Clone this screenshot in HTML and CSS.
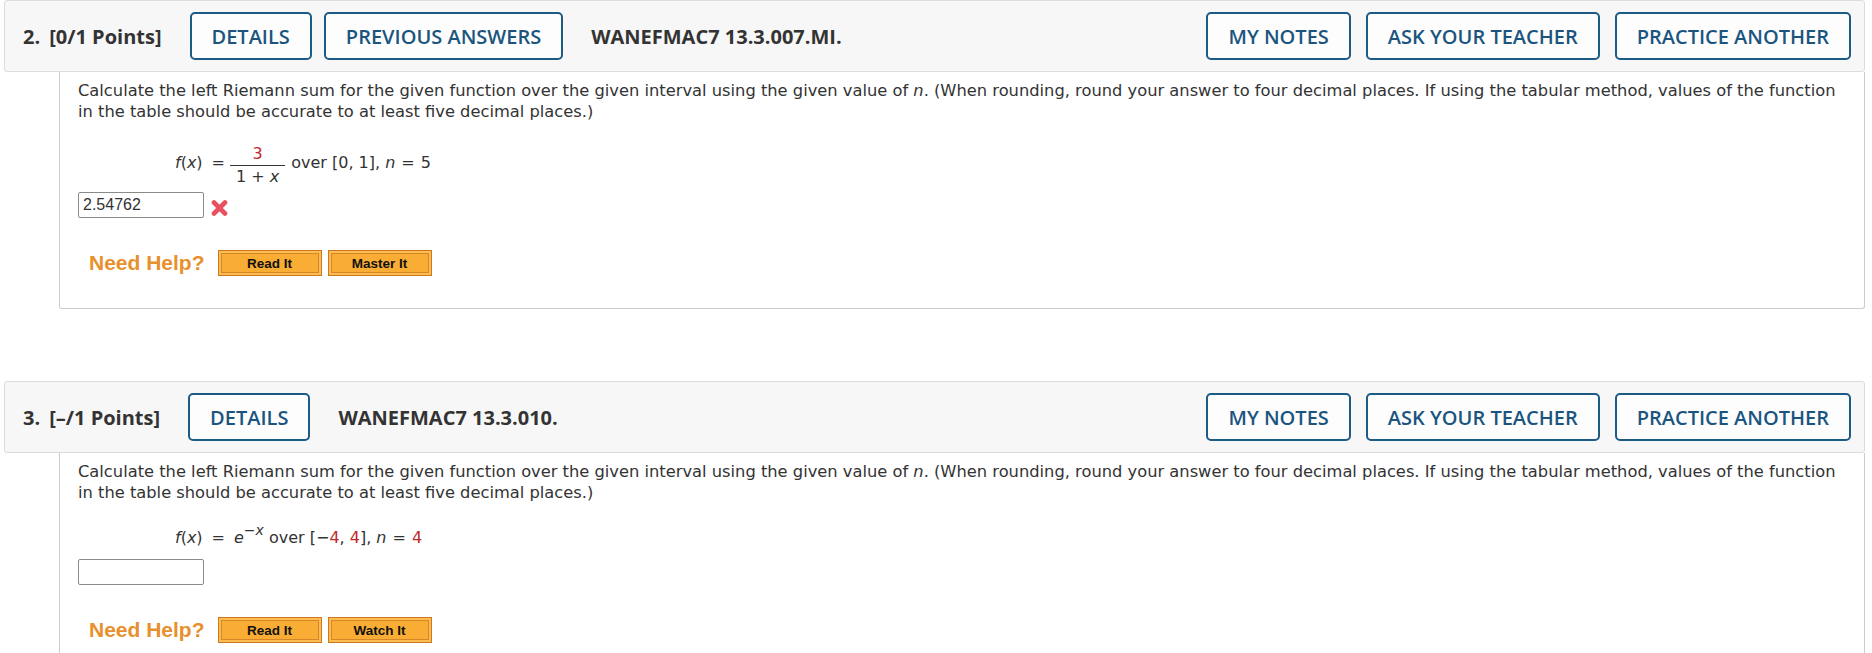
FILE: index.html
```html
<!DOCTYPE html>
<html>
<head>
<meta charset="utf-8">
<link rel="stylesheet" href="styles.css">
</head>
<body>
<div class="question q-first">
  <div class="qhead">
    <span class="qtitle"><span class="qnum">2.</span>[0/1 Points]</span>
    <div class="btns">
      <span class="hbtn">DETAILS</span>
      <span class="hbtn">PREVIOUS ANSWERS</span>
    </div>
    <span class="qid">WANEFMAC7 13.3.007.MI.</span>
    <div class="btns right">
      <span class="hbtn">MY NOTES</span>
      <span class="hbtn">ASK YOUR TEACHER</span>
      <span class="hbtn">PRACTICE ANOTHER</span>
    </div>
  </div>
  <div class="qbody">
    <p class="prompt">Calculate the left Riemann sum for the given function over the given interval using the given value of <i>n</i>. (When rounding, round your answer to four decimal places. If using the tabular method, values of the function in the table should be accurate to at least five decimal places.)</p>
    <div class="formula">
      <span><i>f</i>(<i>x</i>)</span><span class="eq">=</span>
      <span class="frac"><span class="num red">3</span><span class="den">1 + <i>x</i></span></span>
      <span class="after">over [0, 1], <i>n</i><span class="eq2">=</span>5</span>
    </div>
    <div class="answer">
      <span class="inbox">2.54762</span>
      <svg class="wrong" width="17" height="16" viewBox="0 0 17 16"><path d="M3 2.5 L14 13.5 M14 2.5 L3 13.5" stroke="#e8515f" stroke-width="4.6" stroke-linecap="round" fill="none"/></svg>
    </div>
    <div class="help">
      <span class="needhelp">Need Help?</span>
      <span class="obtn">Read It</span>
      <span class="obtn">Master It</span>
    </div>
  </div>
</div>

<div class="question q-second">
  <div class="qhead">
    <span class="qtitle"><span class="qnum">3.</span>[&ndash;/1 Points]</span>
    <div class="btns">
      <span class="hbtn">DETAILS</span>
    </div>
    <span class="qid">WANEFMAC7 13.3.010.</span>
    <div class="btns right">
      <span class="hbtn">MY NOTES</span>
      <span class="hbtn">ASK YOUR TEACHER</span>
      <span class="hbtn">PRACTICE ANOTHER</span>
    </div>
  </div>
  <div class="qbody">
    <p class="prompt">Calculate the left Riemann sum for the given function over the given interval using the given value of <i>n</i>. (When rounding, round your answer to four decimal places. If using the tabular method, values of the function in the table should be accurate to at least five decimal places.)</p>
    <div class="formula single">
      <span><i>f</i>(<i>x</i>)</span><span class="eq">=</span>
      <span><i>e</i><sup>&minus;<i>x</i></sup> over [&minus;<span class="red">4</span>, <span class="red">4</span>], <i>n</i><span class="eq2">=</span><span class="red">4</span></span>
    </div>
    <div class="answer">
      <span class="inbox"></span>
    </div>
    <div class="help">
      <span class="needhelp">Need Help?</span>
      <span class="obtn">Read It</span>
      <span class="obtn">Watch It</span>
    </div>
  </div>
</div>
</body>
</html>
```
FILE: styles.css
```css
html, body {
  margin: 0;
  padding: 0;
  background: #ffffff;
}
body {
  font-family: "DejaVu Sans", Verdana, sans-serif;
  color: #333333;
  width: 1872px;
  overflow: hidden;
}
.question {
  margin-right: 7px;
}
.q-second {
  margin-top: 72px;
}
.qhead {
  margin-left: 4px;
  height: 72px;
  box-sizing: border-box;
  background: #f7f7f7;
  border: 1px solid #dcdcdc;
  border-radius: 3px;
  display: flex;
  align-items: center;
  padding: 0 13px 0 18px;
  font-family: "Open Sans", sans-serif;
  font-size: 20px;
}
.qtitle {
  font-weight: 700;
  color: #333333;
  margin-right: 28px;
  white-space: nowrap;
}
.qnum {
  margin-right: 9px;
}
.btns {
  display: flex;
  gap: 12px;
}
.btns.right {
  margin-left: auto;
  gap: 15px;
}
.hbtn {
  display: flex;
  align-items: center;
  height: 48px;
  box-sizing: border-box;
  padding: 0 20px;
  border: 2px solid #1d5b87;
  border-radius: 5px;
  background: #fdfdfd;
  color: #1b557f;
  font-size: 20px;
  font-weight: 600;
  white-space: nowrap;
}
.qid {
  margin-left: 28px;
  font-weight: 700;
  color: #333333;
  white-space: nowrap;
}
.qbody {
  margin-left: 59px;
  border: 1px solid #cccccc;
  border-top: none;
  border-radius: 0 0 3px 3px;
  padding: 8px 18px 32px 18px;
}
.prompt {
  margin: 0;
  font-size: 16.3px;
  line-height: 21px;
  color: #333333;
}
.formula {
  display: flex;
  align-items: center;
  height: 40px;
  margin: 20px 0 10px 97px;
  font-size: 16px;
  color: #333333;
}
.formula.single {
  height: 28px;
  margin: 20px 0 8px 97px;
}
.eq {
  margin: 0 9px;
}
.formula:not(.single) .eq {
  margin-right: 5px;
}
.eq2 {
  margin: 0 6px;
}
.frac {
  display: inline-flex;
  flex-direction: column;
  align-items: center;
  line-height: 19px;
  margin-right: 6px;
  position: relative;
  top: 3px;
}
.num {
  padding: 0 4px 2px;
}
.den {
  border-top: 1px solid #333333;
  padding: 1px 6px 0;
  white-space: nowrap;
}
.red {
  color: #c0282f;
}
sup {
  font-size: 14px;
  line-height: 0;
  position: relative;
  top: -1px;
  vertical-align: super;
}
.answer {
  display: flex;
  align-items: center;
  height: 26px;
}
.inbox {
  display: flex;
  align-items: center;
  width: 126px;
  height: 26px;
  box-sizing: border-box;
  border: 1px solid #8a8a8a;
  border-radius: 2px;
  padding-left: 4px;
  font-family: "Liberation Sans", Arial, sans-serif;
  font-size: 16px;
  color: #333333;
}
.wrong {
  margin-left: 7px;
  margin-top: 5px;
}
.help {
  display: flex;
  align-items: center;
  margin-top: 32px;
  margin-left: 11px;
  height: 26px;
}
.needhelp {
  font-family: "Liberation Sans", Arial, sans-serif;
  font-weight: 700;
  font-size: 21px;
  color: #e8902c;
  margin-right: 13px;
}
.obtn {
  display: flex;
  align-items: center;
  justify-content: center;
  width: 104px;
  height: 26px;
  box-sizing: border-box;
  margin-right: 6px;
  background: #f9ad34;
  border: 1px solid #cf7720;
  box-shadow: inset 0 0 0 2px #fbbd4f, inset 0 0 0 3px #d8862a;
  font-family: "Liberation Sans", Arial, sans-serif;
  font-weight: 700;
  font-size: 13.5px;
  color: #111111;
}
```
